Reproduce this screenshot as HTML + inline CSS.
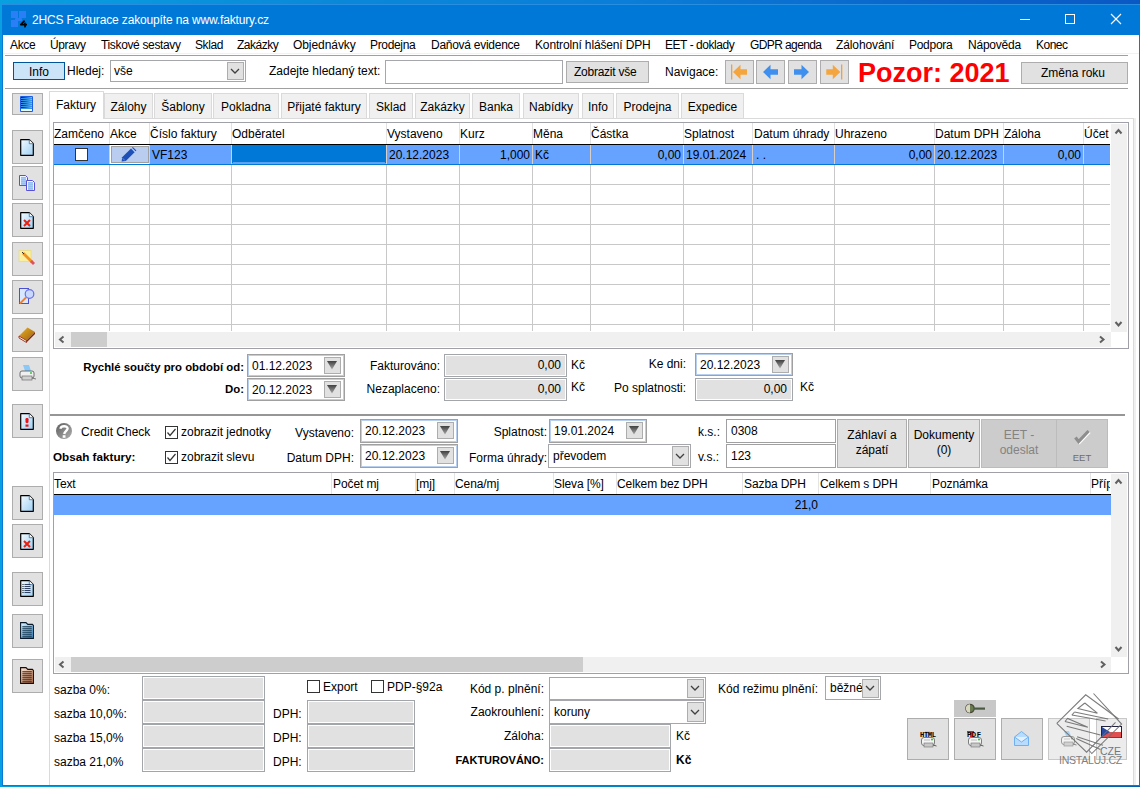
<!DOCTYPE html><html><head><meta charset="utf-8"><style>
*{margin:0;padding:0;box-sizing:border-box}
html,body{width:1140px;height:787px;overflow:hidden}
body{position:relative;background:#0a7fd8;font-family:"Liberation Sans",sans-serif;font-size:12px;color:#000}
.a{position:absolute}
.t{position:absolute;white-space:nowrap;line-height:14px}
.sep{position:absolute;height:2px;border-top:1px solid #a0a0a0;border-bottom:1px solid #fff}
.btn{position:absolute;background:#e1e1e1;border:1px solid #adadad}
.lb{position:absolute;left:12px;width:31px;height:33px;background:#e1e1e1;border:1px solid #adadad}
.inp{position:absolute;background:#fff;border:1px solid #a0a0a0}
.fld{position:absolute;background:#e1e1e1;border:1px solid #a2a5aa;box-shadow:inset 0 0 0 1px #fff}
.cb{position:absolute;width:13px;height:13px;border:1px solid #333;background:#fff}
.dp{position:absolute;background:#fff;border:1px solid #a0a0a0;box-shadow:inset 0 0 0 2px #c7d9f0}
.dpb{position:absolute;background:#e1e1e1;border:1px solid #adadad}
.tab{position:absolute;top:93px;height:25px;background:#f0f0f0;border:1px solid #dadada;border-bottom:none}
svg{position:absolute;overflow:visible}
</style></head><body>
<div class="a" style="left:0px;top:0px;width:1140px;height:787px;background:linear-gradient(90deg,#08a0e0,#0a88d8 30%,#0a7ed8 55%,#0a66cc 80%,#0a58c4)"></div>
<div class="a" style="left:0px;top:786px;width:1140px;height:1px;background:linear-gradient(90deg,#00a0e0,#0088c8 50%,#0060b0)"></div>
<div class="a" style="left:2px;top:4px;width:1138px;height:782px;background:#fff;border:1px solid #0a78d6"></div>
<div class="a" style="left:2px;top:4px;width:1138px;height:31px;background:#0078d7"></div>
<div class="a" style="left:2px;top:4px;width:1138px;height:1px;background:#2a8ee0"></div>
<div class="a" style="left:1134px;top:118px;width:2px;height:667px;background:#f0f0f0"></div>
<div class="a" style="left:11px;top:11px;width:7px;height:7px;background:#2a7ef6"></div>
<div class="a" style="left:19px;top:11px;width:7px;height:7px;background:#2a7ef6"></div>
<div class="a" style="left:11px;top:20px;width:7px;height:7px;background:#2a7ef6"></div>
<div class="a" style="left:15px;top:18px;width:7px;height:3px;background:#2a7ef6;border-radius:1px"></div>
<svg style="left:20px;top:20px" width="8" height="8"><path d="M4.6 0.6 L0.8 4.6 L7 4.6 M4.9 2.6 L5.1 7.4" fill="none" stroke="#000" stroke-width="1.7" stroke-linejoin="round"/></svg>
<div class="t" style="left:32px;top:13px;color:#fff;font-size:12px;letter-spacing:-0.15px">2HCS Fakturace zakoupíte na www.faktury.cz</div>
<div class="a" style="left:1020px;top:19px;width:10px;height:1px;background:#fff"></div>
<div class="a" style="left:1065px;top:14px;width:10px;height:10px;border:1px solid #fff"></div>
<svg style="left:1110px;top:13px" width="12" height="12"><path d="M1 1 L11 11 M11 1 L1 11" stroke="#fff" stroke-width="1.1"/></svg>
<div class="t" style="left:10px;top:38px;letter-spacing:-0.33px">Akce</div>
<div class="t" style="left:50px;top:38px;letter-spacing:-0.4px">Úpravy</div>
<div class="t" style="left:101px;top:38px;letter-spacing:-0.35px">Tiskové sestavy</div>
<div class="t" style="left:195px;top:38px;letter-spacing:-0.41px">Sklad</div>
<div class="t" style="left:237px;top:38px;letter-spacing:-0.5px">Zakázky</div>
<div class="t" style="left:293px;top:38px;letter-spacing:-0.07px">Objednávky</div>
<div class="t" style="left:370px;top:38px;letter-spacing:-0.34px">Prodejna</div>
<div class="t" style="left:431px;top:38px;letter-spacing:-0.27px">Daňová evidence</div>
<div class="t" style="left:535px;top:38px;letter-spacing:-0.15px">Kontrolní hlášení DPH</div>
<div class="t" style="left:665px;top:38px;letter-spacing:-0.45px">EET - doklady</div>
<div class="t" style="left:750px;top:38px;letter-spacing:-0.6px">GDPR agenda</div>
<div class="t" style="left:836px;top:38px;letter-spacing:-0.11px">Zálohování</div>
<div class="t" style="left:909px;top:38px;letter-spacing:-0.28px">Podpora</div>
<div class="t" style="left:968px;top:38px;letter-spacing:-0.23px">Nápověda</div>
<div class="t" style="left:1036px;top:38px;letter-spacing:-0.5px">Konec</div>
<div class="a" style="left:3px;top:53px;width:1136px;height:1px;background:#f2f2f2"></div>
<div class="sep" style="left:5px;top:55px;width:1123px"></div>
<div class="sep" style="left:5px;top:88px;width:1123px"></div>
<div class="a" style="left:13px;top:62px;width:52px;height:18px;background:#cce4f7;border:1px solid #005499"></div>
<div class="t" style="left:29px;top:65px;">Info</div>
<div class="t" style="left:67px;top:64px;">Hledej:</div>
<div class="inp" style="left:110px;top:60px;width:136px;height:22px;border-color:#a5a7ab"></div>
<div class="dpb" style="left:227px;top:62px;width:17px;height:18px"></div>
<svg style="left:231px;top:69px" width="8" height="4"><path d="M0 0 L4.0 4 L8 0" fill="none" stroke="#404040" stroke-width="1.3"/></svg>
<div class="t" style="left:114px;top:64px;">vše</div>
<div class="t" style="left:269px;top:64px;">Zadejte hledaný text:</div>
<div class="inp" style="left:385px;top:60px;width:178px;height:24px;border-color:#a5a7ab"></div>
<div class="btn" style="left:566px;top:61px;width:83px;height:22px"></div>
<div class="t" style="left:574px;top:65px;letter-spacing:-0.25px">Zobrazit vše</div>
<div class="t" style="left:665px;top:65px;">Navigace:</div>
<div class="btn" style="left:725px;top:60px;width:29px;height:24px"></div>
<div class="btn" style="left:756px;top:60px;width:29px;height:24px"></div>
<div class="btn" style="left:788px;top:60px;width:29px;height:24px"></div>
<div class="btn" style="left:820px;top:60px;width:29px;height:24px"></div>
<svg style="left:731px;top:64px" width="18" height="16"><rect x="0" y="0.5" width="1.3" height="15" fill="#f0a040"/><path d="M2 8 L9.5 0.8 L9.5 5.2 L16 5.2 L16 10.8 L9.5 10.8 L9.5 15.2 Z" fill="#f4a53e"/></svg>
<svg style="left:763px;top:64px" width="18" height="16"><path d="M0 8 L7.5 0.8 L7.5 5.2 L15 5.2 L15 10.8 L7.5 10.8 L7.5 15.2 Z" fill="#3f90ee"/></svg>
<svg style="left:794px;top:64px" width="18" height="16"><path d="M15 8 L7.5 0.8 L7.5 5.2 L0 5.2 L0 10.8 L7.5 10.8 L7.5 15.2 Z" fill="#3f90ee"/></svg>
<svg style="left:826px;top:64px" width="18" height="16"><rect x="15" y="0.5" width="1.3" height="15" fill="#f0a040"/><path d="M14.3 8 L6.8 0.8 L6.8 5.2 L0.3 5.2 L0.3 10.8 L6.8 10.8 L6.8 15.2 Z" fill="#f4a53e"/></svg>
<div class="t" style="left:858px;top:58px;font-size:27px;font-weight:bold;color:#ff0000;line-height:30px">Pozor: 2021</div>
<div class="btn" style="left:1021px;top:62px;width:107px;height:22px"></div>
<div class="t" style="left:1041px;top:66px;">Změna roku</div>
<div class="lb" style="top:93px;height:22px"></div>
<div class="lb" style="top:130px;height:34px"></div>
<div class="lb" style="top:166px;height:34px"></div>
<div class="lb" style="top:203px;height:34px"></div>
<div class="lb" style="top:242px;height:34px"></div>
<div class="lb" style="top:280px;height:34px"></div>
<div class="lb" style="top:318px;height:34px"></div>
<div class="lb" style="top:357px;height:34px"></div>
<div class="lb" style="top:404px;height:34px"></div>
<div class="lb" style="top:486px;height:34px"></div>
<div class="lb" style="top:524px;height:34px"></div>
<div class="lb" style="top:572px;height:34px"></div>
<div class="lb" style="top:614px;height:34px"></div>
<div class="lb" style="top:659px;height:34px"></div>
<div class="a" style="left:49px;top:91px;width:1px;height:694px;background:#dadada"></div>
<div class="a" style="left:1133px;top:118px;width:1px;height:667px;background:#dadada"></div>
<div class="a" style="left:104px;top:118px;width:1030px;height:1px;background:#dadada"></div>
<div class="tab" style="left:104px;width:49px"><div class="t" style="left:0;width:100%;text-align:center;top:6px">Zálohy</div></div>
<div class="tab" style="left:154px;width:58px"><div class="t" style="left:0;width:100%;text-align:center;top:6px">Šablony</div></div>
<div class="tab" style="left:213px;width:66px"><div class="t" style="left:0;width:100%;text-align:center;top:6px">Pokladna</div></div>
<div class="tab" style="left:281px;width:86px"><div class="t" style="left:0;width:100%;text-align:center;top:6px">Přijaté faktury</div></div>
<div class="tab" style="left:369px;width:44px"><div class="t" style="left:0;width:100%;text-align:center;top:6px">Sklad</div></div>
<div class="tab" style="left:415px;width:55px"><div class="t" style="left:0;width:100%;text-align:center;top:6px">Zakázky</div></div>
<div class="tab" style="left:472px;width:48px"><div class="t" style="left:0;width:100%;text-align:center;top:6px">Banka</div></div>
<div class="tab" style="left:523px;width:56px"><div class="t" style="left:0;width:100%;text-align:center;top:6px">Nabídky</div></div>
<div class="tab" style="left:582px;width:32px"><div class="t" style="left:0;width:100%;text-align:center;top:6px">Info</div></div>
<div class="tab" style="left:616px;width:63px"><div class="t" style="left:0;width:100%;text-align:center;top:6px">Prodejna</div></div>
<div class="tab" style="left:681px;width:63px"><div class="t" style="left:0;width:100%;text-align:center;top:6px">Expedice</div></div>
<div class="a" style="left:49px;top:91px;width:55px;height:28px;background:#fff;border:1px solid #dadada;border-bottom:none"></div>
<div class="t" style="left:56px;top:98px;">Faktury</div>
<div class="a" style="left:53px;top:122px;width:1076px;height:227px;border:1px solid #a0a0a8;background:#fff"></div>
<div class="a" style="left:54px;top:184px;width:1056px;height:1px;background:#c8c8c8"></div>
<div class="a" style="left:54px;top:204px;width:1056px;height:1px;background:#c8c8c8"></div>
<div class="a" style="left:54px;top:224px;width:1056px;height:1px;background:#c8c8c8"></div>
<div class="a" style="left:54px;top:244px;width:1056px;height:1px;background:#c8c8c8"></div>
<div class="a" style="left:54px;top:264px;width:1056px;height:1px;background:#c8c8c8"></div>
<div class="a" style="left:54px;top:284px;width:1056px;height:1px;background:#c8c8c8"></div>
<div class="a" style="left:54px;top:304px;width:1056px;height:1px;background:#c8c8c8"></div>
<div class="a" style="left:54px;top:324px;width:1056px;height:1px;background:#c8c8c8"></div>
<div class="a" style="left:109px;top:123px;width:1px;height:21px;background:#e2e2e2"></div>
<div class="a" style="left:109px;top:165px;width:1px;height:166px;background:#c8c8c8"></div>
<div class="a" style="left:149px;top:123px;width:1px;height:21px;background:#e2e2e2"></div>
<div class="a" style="left:149px;top:165px;width:1px;height:166px;background:#c8c8c8"></div>
<div class="a" style="left:231px;top:123px;width:1px;height:21px;background:#e2e2e2"></div>
<div class="a" style="left:231px;top:165px;width:1px;height:166px;background:#c8c8c8"></div>
<div class="a" style="left:386px;top:123px;width:1px;height:21px;background:#e2e2e2"></div>
<div class="a" style="left:386px;top:165px;width:1px;height:166px;background:#c8c8c8"></div>
<div class="a" style="left:459px;top:123px;width:1px;height:21px;background:#e2e2e2"></div>
<div class="a" style="left:459px;top:165px;width:1px;height:166px;background:#c8c8c8"></div>
<div class="a" style="left:532px;top:123px;width:1px;height:21px;background:#e2e2e2"></div>
<div class="a" style="left:532px;top:165px;width:1px;height:166px;background:#c8c8c8"></div>
<div class="a" style="left:590px;top:123px;width:1px;height:21px;background:#e2e2e2"></div>
<div class="a" style="left:590px;top:165px;width:1px;height:166px;background:#c8c8c8"></div>
<div class="a" style="left:683px;top:123px;width:1px;height:21px;background:#e2e2e2"></div>
<div class="a" style="left:683px;top:165px;width:1px;height:166px;background:#c8c8c8"></div>
<div class="a" style="left:752px;top:123px;width:1px;height:21px;background:#e2e2e2"></div>
<div class="a" style="left:752px;top:165px;width:1px;height:166px;background:#c8c8c8"></div>
<div class="a" style="left:834px;top:123px;width:1px;height:21px;background:#e2e2e2"></div>
<div class="a" style="left:834px;top:165px;width:1px;height:166px;background:#c8c8c8"></div>
<div class="a" style="left:934px;top:123px;width:1px;height:21px;background:#e2e2e2"></div>
<div class="a" style="left:934px;top:165px;width:1px;height:166px;background:#c8c8c8"></div>
<div class="a" style="left:1003px;top:123px;width:1px;height:21px;background:#e2e2e2"></div>
<div class="a" style="left:1003px;top:165px;width:1px;height:166px;background:#c8c8c8"></div>
<div class="a" style="left:1083px;top:123px;width:1px;height:21px;background:#e2e2e2"></div>
<div class="a" style="left:1083px;top:165px;width:1px;height:166px;background:#c8c8c8"></div>
<div class="t" style="left:54px;top:127px;">Zamčeno</div>
<div class="t" style="left:110px;top:127px;">Akce</div>
<div class="t" style="left:150px;top:127px;">Číslo faktury</div>
<div class="t" style="left:232px;top:127px;">Odběratel</div>
<div class="t" style="left:387px;top:127px;">Vystaveno</div>
<div class="t" style="left:460px;top:127px;">Kurz</div>
<div class="t" style="left:533px;top:127px;">Měna</div>
<div class="t" style="left:591px;top:127px;">Částka</div>
<div class="t" style="left:684px;top:127px;">Splatnost</div>
<div class="t" style="left:754px;top:127px;">Datum úhrady</div>
<div class="t" style="left:835px;top:127px;">Uhrazeno</div>
<div class="t" style="left:935px;top:127px;">Datum DPH</div>
<div class="t" style="left:1004px;top:127px;">Záloha</div>
<div class="t" style="left:1084px;top:127px;">Účet</div>
<div class="a" style="left:54px;top:144px;width:1056px;height:1px;background:#000"></div>
<div class="a" style="left:54px;top:145px;width:1056px;height:19px;background:#66a2ff"></div>
<div class="a" style="left:54px;top:164px;width:1056px;height:1px;background:#0078d7"></div>
<div class="a" style="left:109px;top:145px;width:1px;height:19px;background:#d8d0c8"></div>
<div class="a" style="left:149px;top:145px;width:1px;height:19px;background:#d8d0c8"></div>
<div class="a" style="left:231px;top:145px;width:1px;height:19px;background:#d8d0c8"></div>
<div class="a" style="left:386px;top:145px;width:1px;height:19px;background:#d8d0c8"></div>
<div class="a" style="left:459px;top:145px;width:1px;height:19px;background:#d8d0c8"></div>
<div class="a" style="left:532px;top:145px;width:1px;height:19px;background:#d8d0c8"></div>
<div class="a" style="left:590px;top:145px;width:1px;height:19px;background:#d8d0c8"></div>
<div class="a" style="left:683px;top:145px;width:1px;height:19px;background:#d8d0c8"></div>
<div class="a" style="left:752px;top:145px;width:1px;height:19px;background:#d8d0c8"></div>
<div class="a" style="left:834px;top:145px;width:1px;height:19px;background:#d8d0c8"></div>
<div class="a" style="left:934px;top:145px;width:1px;height:19px;background:#d8d0c8"></div>
<div class="a" style="left:1003px;top:145px;width:1px;height:19px;background:#d8d0c8"></div>
<div class="a" style="left:1083px;top:145px;width:1px;height:19px;background:#d8d0c8"></div>
<div class="a" style="left:232px;top:145px;width:154px;height:18px;background:#0078d7"></div>
<div class="a" style="left:233px;top:162px;width:152px;height:1px;background:#5ea0f0"></div>
<div class="cb" style="left:75px;top:148px"></div>
<div class="a" style="left:110px;top:145px;width:39px;height:19px;background:#fff"></div>
<div class="a" style="left:111px;top:146px;width:38px;height:17px;background:#b8cdf0;border:1px solid #a0a0a0"></div>
<svg style="left:121px;top:147px" width="16" height="15"><path d="M1.2 10.2 L10 1.6 L13.6 5.2 L4.8 14 L0.6 14.6 Z" fill="#1f50b8"/><path d="M11 0.7 L11.8 -0.1 L15.4 3.5 L14.6 4.3 Z" fill="#1f50b8"/><path d="M1.6 11.2 L3.8 13.4" stroke="#8aa8e0" stroke-width="0.7"/></svg>
<div class="t" style="left:152px;top:148px;">VF123</div>
<div class="t" style="left:389px;top:148px;">20.12.2023</div>
<div class="t" style="right:610px;top:148px;">1,000</div>
<div class="t" style="left:535px;top:148px;">Kč</div>
<div class="t" style="right:459px;top:148px;">0,00</div>
<div class="t" style="left:686px;top:148px;">19.01.2024</div>
<div class="t" style="left:756px;top:148px;">. .</div>
<div class="t" style="right:208px;top:148px;">0,00</div>
<div class="t" style="left:937px;top:148px;">20.12.2023</div>
<div class="t" style="right:59px;top:148px;">0,00</div>
<div class="a" style="left:1111px;top:124px;width:16px;height:208px;background:#f0f0f0"></div>
<svg style="left:1115px;top:128px" width="7" height="7"><path d="M0.5 5.5 L3.5 2 L6.5 5.5" fill="none" stroke="#606060" stroke-width="2"/></svg>
<svg style="left:1115px;top:321px" width="7" height="7"><path d="M0.5 1 L3.5 4.5 L6.5 1" fill="none" stroke="#606060" stroke-width="2"/></svg>
<div class="a" style="left:55px;top:332px;width:1056px;height:15px;background:#f0f0f0"></div>
<div class="a" style="left:71px;top:332px;width:36px;height:15px;background:#cdcdcd"></div>
<svg style="left:58px;top:336px" width="7" height="7"><path d="M5.5 0.5 L2 3.5 L5.5 6.5" fill="none" stroke="#606060" stroke-width="2"/></svg>
<svg style="left:1099px;top:336px" width="7" height="7"><path d="M1 0.5 L4.5 3.5 L1 6.5" fill="none" stroke="#606060" stroke-width="2"/></svg>
<div class="t" style="right:896px;top:360px;font-weight:bold;font-size:11.4px">Rychlé součty pro období od:</div>
<div class="t" style="right:896px;top:382px;font-weight:bold;font-size:11.4px">Do:</div>
<div class="a" style="left:247px;top:354px;width:98px;height:23px;background:#fff;border:1px solid #a0a0a0;box-shadow:inset 0 0 0 1px #b8d0ee"></div>
<div class="dpb" style="left:324px;top:357px;width:17px;height:17px"></div>
<svg style="left:327px;top:361px" width="10" height="9"><defs><linearGradient id="tg" x1="0" y1="0" x2="0" y2="1"><stop offset="0" stop-color="#404040"/><stop offset="1" stop-color="#a8a8a8"/></linearGradient></defs><path d="M0 0 L10 0 L5 8.5 Z" fill="url(#tg)"/></svg>
<div class="t" style="left:252px;top:359px;">01.12.2023</div>
<div class="a" style="left:247px;top:378px;width:98px;height:23px;background:#fff;border:1px solid #a0a0a0;box-shadow:inset 0 0 0 1px #b8d0ee"></div>
<div class="dpb" style="left:324px;top:381px;width:17px;height:17px"></div>
<svg style="left:327px;top:385px" width="10" height="9"><defs><linearGradient id="tg" x1="0" y1="0" x2="0" y2="1"><stop offset="0" stop-color="#404040"/><stop offset="1" stop-color="#a8a8a8"/></linearGradient></defs><path d="M0 0 L10 0 L5 8.5 Z" fill="url(#tg)"/></svg>
<div class="t" style="left:252px;top:383px;">20.12.2023</div>
<div class="t" style="right:700px;top:359px;">Fakturováno:</div>
<div class="t" style="right:700px;top:382px;">Nezaplaceno:</div>
<div class="fld" style="left:444px;top:354px;width:123px;height:23px"></div>
<div class="t" style="right:579px;top:358px;">0,00</div>
<div class="fld" style="left:444px;top:378px;width:123px;height:23px"></div>
<div class="t" style="right:579px;top:382px;">0,00</div>
<div class="t" style="left:571px;top:358px;">Kč</div>
<div class="t" style="left:571px;top:380px;">Kč</div>
<div class="t" style="right:454px;top:357px;">Ke dni:</div>
<div class="a" style="left:695px;top:353px;width:98px;height:23px;background:#fff;border:1px solid #a0a0a0;box-shadow:inset 0 0 0 1px #b8d0ee"></div>
<div class="dpb" style="left:772px;top:356px;width:17px;height:17px"></div>
<svg style="left:775px;top:360px" width="10" height="9"><defs><linearGradient id="tg" x1="0" y1="0" x2="0" y2="1"><stop offset="0" stop-color="#404040"/><stop offset="1" stop-color="#a8a8a8"/></linearGradient></defs><path d="M0 0 L10 0 L5 8.5 Z" fill="url(#tg)"/></svg>
<div class="t" style="left:700px;top:358px;">20.12.2023</div>
<div class="t" style="right:454px;top:381px;">Po splatnosti:</div>
<div class="fld" style="left:695px;top:378px;width:98px;height:23px"></div>
<div class="t" style="right:353px;top:382px;">0,00</div>
<div class="t" style="left:800px;top:380px;">Kč</div>
<div class="a" style="left:50px;top:414px;width:1075px;height:2px;background:#969696"></div>
<svg style="left:56px;top:423px" width="16" height="16"><defs><linearGradient id="qg" x1="0" y1="0" x2="1" y2="1"><stop offset="0" stop-color="#5e5e5e"/><stop offset="1" stop-color="#b0b0b0"/></linearGradient></defs><circle cx="8" cy="8" r="8" fill="url(#qg)"/><path d="M4.6 5.8 C4.6 2.6 11.6 2.4 11.6 5.6 C11.6 7.6 8.6 8.2 8.2 11" fill="none" stroke="#fff" stroke-width="2.4"/><rect x="6.7" y="12.2" width="2.8" height="2.6" fill="#fff"/></svg>
<div class="t" style="left:81px;top:425px;">Credit Check</div>
<div class="cb" style="left:165px;top:426px;border-color:#333"></div>
<svg style="left:165px;top:426px" width="13" height="13"><path d="M2.5 6.5 L5 9.5 L10.5 3" fill="none" stroke="#333" stroke-width="1.2"/></svg>
<div class="t" style="left:181px;top:425px;">zobrazit jednotky</div>
<div class="t" style="left:53px;top:450px;font-weight:bold;font-size:11.7px">Obsah faktury:</div>
<div class="cb" style="left:165px;top:451px;border-color:#333"></div>
<svg style="left:165px;top:451px" width="13" height="13"><path d="M2.5 6.5 L5 9.5 L10.5 3" fill="none" stroke="#333" stroke-width="1.2"/></svg>
<div class="t" style="left:181px;top:450px;">zobrazit slevu</div>
<div class="t" style="right:786px;top:426px;">Vystaveno:</div>
<div class="t" style="right:786px;top:451px;">Datum DPH:</div>
<div class="a" style="left:360px;top:419px;width:98px;height:24px;background:#fff;border:1px solid #a0a0a0;box-shadow:inset 0 0 0 1px #b8d0ee"></div>
<div class="dpb" style="left:437px;top:422px;width:17px;height:17px"></div>
<svg style="left:440px;top:426px" width="10" height="9"><defs><linearGradient id="tg" x1="0" y1="0" x2="0" y2="1"><stop offset="0" stop-color="#404040"/><stop offset="1" stop-color="#a8a8a8"/></linearGradient></defs><path d="M0 0 L10 0 L5 8.5 Z" fill="url(#tg)"/></svg>
<div class="t" style="left:365px;top:424px;">20.12.2023</div>
<div class="a" style="left:360px;top:444px;width:98px;height:24px;background:#fff;border:1px solid #a0a0a0;box-shadow:inset 0 0 0 1px #b8d0ee"></div>
<div class="dpb" style="left:437px;top:447px;width:17px;height:17px"></div>
<svg style="left:440px;top:451px" width="10" height="9"><defs><linearGradient id="tg" x1="0" y1="0" x2="0" y2="1"><stop offset="0" stop-color="#404040"/><stop offset="1" stop-color="#a8a8a8"/></linearGradient></defs><path d="M0 0 L10 0 L5 8.5 Z" fill="url(#tg)"/></svg>
<div class="t" style="left:365px;top:449px;">20.12.2023</div>
<div class="t" style="right:593px;top:425px;">Splatnost:</div>
<div class="t" style="right:593px;top:451px;">Forma úhrady:</div>
<div class="a" style="left:549px;top:419px;width:98px;height:24px;background:#fff;border:1px solid #a0a0a0;box-shadow:inset 0 0 0 1px #b8d0ee"></div>
<div class="dpb" style="left:626px;top:422px;width:17px;height:17px"></div>
<svg style="left:629px;top:426px" width="10" height="9"><defs><linearGradient id="tg" x1="0" y1="0" x2="0" y2="1"><stop offset="0" stop-color="#404040"/><stop offset="1" stop-color="#a8a8a8"/></linearGradient></defs><path d="M0 0 L10 0 L5 8.5 Z" fill="url(#tg)"/></svg>
<div class="t" style="left:554px;top:424px;">19.01.2024</div>
<div class="inp" style="left:548px;top:444px;width:143px;height:24px;border-color:#a5a7ab"></div>
<div class="dpb" style="left:672px;top:446px;width:17px;height:20px"></div>
<svg style="left:676px;top:454px" width="8" height="4"><path d="M0 0 L4.0 4 L8 0" fill="none" stroke="#404040" stroke-width="1.3"/></svg>
<div class="t" style="left:553px;top:449px;">převodem</div>
<div class="t" style="left:698px;top:425px;">k.s.:</div>
<div class="t" style="left:698px;top:450px;">v.s.:</div>
<div class="inp" style="left:726px;top:419px;width:110px;height:24px"></div>
<div class="t" style="left:731px;top:424px;">0308</div>
<div class="inp" style="left:726px;top:444px;width:110px;height:24px"></div>
<div class="t" style="left:731px;top:449px;">123</div>
<div class="btn" style="left:837px;top:419px;width:70px;height:49px"></div>
<div class="t" style="left:837px;top:428px;width:70px;text-align:center">Záhlaví a</div>
<div class="t" style="left:837px;top:443px;width:70px;text-align:center">zápatí</div>
<div class="btn" style="left:908px;top:419px;width:72px;height:49px"></div>
<div class="t" style="left:908px;top:428px;width:72px;text-align:center">Dokumenty</div>
<div class="t" style="left:908px;top:443px;width:72px;text-align:center">(0)</div>
<div class="btn" style="left:981px;top:419px;width:76px;height:49px;background:#cccccc;border-color:#bcbcbc"></div>
<div class="t" style="left:981px;top:428px;width:76px;text-align:center;color:#838383">EET -</div>
<div class="t" style="left:981px;top:443px;width:76px;text-align:center;color:#838383">odeslat</div>
<div class="btn" style="left:1056px;top:419px;width:52px;height:49px;background:#cccccc;border-color:#bcbcbc"></div>
<svg style="left:1074px;top:429px" width="17" height="17"><path d="M2.2 9.6 L5.6 13.6 L15.6 3" fill="none" stroke="#ffffff" stroke-width="2.6"/><path d="M1.4 8.6 L4.6 12.6 L14.6 2" fill="none" stroke="#8e8e8e" stroke-width="3.2"/></svg>
<div class="t" style="left:1056px;top:451px;width:52px;text-align:center;color:#6e6e6e;font-size:9.5px">EET</div>
<div class="a" style="left:53px;top:472px;width:1076px;height:202px;border:1px solid #a0a0a8;background:#fff"></div>
<div class="a" style="left:331px;top:473px;width:1px;height:21px;background:#e4e4e4"></div>
<div class="a" style="left:415px;top:473px;width:1px;height:21px;background:#e4e4e4"></div>
<div class="a" style="left:454px;top:473px;width:1px;height:21px;background:#e4e4e4"></div>
<div class="a" style="left:553px;top:473px;width:1px;height:21px;background:#e4e4e4"></div>
<div class="a" style="left:616px;top:473px;width:1px;height:21px;background:#e4e4e4"></div>
<div class="a" style="left:742px;top:473px;width:1px;height:21px;background:#e4e4e4"></div>
<div class="a" style="left:818px;top:473px;width:1px;height:21px;background:#e4e4e4"></div>
<div class="a" style="left:930px;top:473px;width:1px;height:21px;background:#e4e4e4"></div>
<div class="a" style="left:1090px;top:473px;width:1px;height:21px;background:#e4e4e4"></div>
<div class="t" style="left:54px;top:477px;letter-spacing:-0.1px">Text</div>
<div class="t" style="left:333px;top:477px;letter-spacing:-0.1px">Počet mj</div>
<div class="t" style="left:416px;top:477px;letter-spacing:-0.1px">[mj]</div>
<div class="t" style="left:455px;top:477px;letter-spacing:-0.1px">Cena/mj</div>
<div class="t" style="left:554px;top:477px;letter-spacing:-0.1px">Sleva [%]</div>
<div class="t" style="left:617px;top:477px;letter-spacing:-0.1px">Celkem bez DPH</div>
<div class="t" style="left:744px;top:477px;letter-spacing:-0.1px">Sazba DPH</div>
<div class="t" style="left:820px;top:477px;letter-spacing:-0.1px">Celkem s DPH</div>
<div class="t" style="left:932px;top:477px;letter-spacing:-0.1px">Poznámka</div>
<div class="t" style="left:1091px;top:477px;width:19px;overflow:hidden">Příp</div>
<div class="a" style="left:54px;top:494px;width:1057px;height:1px;background:#000"></div>
<div class="a" style="left:54px;top:495px;width:1057px;height:20px;background:#66a2ff"></div>
<div class="t" style="right:322px;top:498px;">21,0</div>
<div class="a" style="left:1111px;top:474px;width:16px;height:183px;background:#f0f0f0"></div>
<svg style="left:1115px;top:478px" width="7" height="7"><path d="M0.5 5.5 L3.5 2 L6.5 5.5" fill="none" stroke="#606060" stroke-width="2"/></svg>
<svg style="left:1115px;top:646px" width="7" height="7"><path d="M0.5 1 L3.5 4.5 L6.5 1" fill="none" stroke="#606060" stroke-width="2"/></svg>
<div class="a" style="left:55px;top:657px;width:1056px;height:15px;background:#f0f0f0"></div>
<div class="a" style="left:71px;top:657px;width:512px;height:15px;background:#cdcdcd"></div>
<svg style="left:58px;top:661px" width="7" height="7"><path d="M5.5 0.5 L2 3.5 L5.5 6.5" fill="none" stroke="#606060" stroke-width="2"/></svg>
<svg style="left:1100px;top:661px" width="7" height="7"><path d="M1 0.5 L4.5 3.5 L1 6.5" fill="none" stroke="#606060" stroke-width="2"/></svg>
<div class="t" style="left:54px;top:683px;">sazba 0%:</div>
<div class="fld" style="left:142px;top:676px;width:123px;height:24px"></div>
<div class="t" style="left:54px;top:707px;">sazba 10,0%:</div>
<div class="fld" style="left:142px;top:700px;width:123px;height:24px"></div>
<div class="t" style="left:273px;top:707px;">DPH:</div>
<div class="fld" style="left:307px;top:700px;width:108px;height:24px"></div>
<div class="t" style="left:54px;top:731px;">sazba 15,0%</div>
<div class="fld" style="left:142px;top:724px;width:123px;height:24px"></div>
<div class="t" style="left:273px;top:731px;">DPH:</div>
<div class="fld" style="left:307px;top:724px;width:108px;height:24px"></div>
<div class="t" style="left:54px;top:755px;">sazba 21,0%</div>
<div class="fld" style="left:142px;top:748px;width:123px;height:24px"></div>
<div class="t" style="left:273px;top:755px;">DPH:</div>
<div class="fld" style="left:307px;top:748px;width:108px;height:24px"></div>
<div class="cb" style="left:307px;top:680px;border-color:#333"></div>
<div class="t" style="left:323px;top:680px;">Export</div>
<div class="cb" style="left:371px;top:680px;border-color:#333"></div>
<div class="t" style="left:387px;top:680px;">PDP-§92a</div>
<div class="t" style="right:596px;top:682px;">Kód p. plnění:</div>
<div class="inp" style="left:549px;top:677px;width:157px;height:23px;border-color:#a5a7ab"></div>
<div class="dpb" style="left:687px;top:679px;width:17px;height:19px"></div>
<svg style="left:691px;top:686px" width="8" height="4"><path d="M0 0 L4.0 4 L8 0" fill="none" stroke="#404040" stroke-width="1.3"/></svg>
<div class="t" style="right:596px;top:705px;">Zaokrouhlení:</div>
<div class="inp" style="left:549px;top:700px;width:157px;height:24px;border-color:#a5a7ab"></div>
<div class="dpb" style="left:687px;top:702px;width:17px;height:20px"></div>
<svg style="left:691px;top:710px" width="8" height="4"><path d="M0 0 L4.0 4 L8 0" fill="none" stroke="#404040" stroke-width="1.3"/></svg>
<div class="t" style="left:554px;top:705px;">koruny</div>
<div class="t" style="right:596px;top:729px;">Záloha:</div>
<div class="fld" style="left:549px;top:724px;width:122px;height:24px"></div>
<div class="t" style="left:676px;top:729px;">Kč</div>
<div class="t" style="right:596px;top:753px;font-weight:bold;font-size:11px">FAKTUROVÁNO:</div>
<div class="fld" style="left:549px;top:748px;width:122px;height:24px"></div>
<div class="t" style="left:676px;top:753px;font-weight:bold">Kč</div>
<div class="t" style="left:718px;top:682px;">Kód režimu plnění:</div>
<div class="inp" style="left:825px;top:676px;width:56px;height:24px;border-color:#a5a7ab"></div>
<div class="t" style="left:830px;top:681px;width:32px;overflow:hidden">běžné</div>
<div class="dpb" style="left:862px;top:679px;width:17px;height:19px"></div>
<svg style="left:866px;top:686px" width="8" height="4"><path d="M0 0 L4.0 4 L8 0" fill="none" stroke="#404040" stroke-width="1.3"/></svg>
<div class="a" style="left:954px;top:700px;width:42px;height:17px;background:#c8c8c8"></div>
<svg style="left:965px;top:703px" width="22" height="11"><circle cx="5" cy="5.5" r="4.2" fill="#6a7a50" stroke="#4a4a3a" stroke-width="1.2"/><path d="M5 1.3 A4.2 4.2 0 0 0 5 9.7 Z" fill="#d8d8c0"/><rect x="9" y="4.5" width="11" height="2.2" fill="#4a5a40"/></svg>
<div class="btn" style="left:907px;top:718px;width:42px;height:42px"></div>
<div class="btn" style="left:954px;top:718px;width:42px;height:42px"></div>
<div class="btn" style="left:1001px;top:718px;width:42px;height:42px"></div>
<div class="btn" style="left:1048px;top:718px;width:42px;height:42px;background:#ececec;border-color:#c8c8c8"></div>
<div class="btn" style="left:1096px;top:718px;width:31px;height:42px;background:#ececec;border-color:#c8c8c8"></div>
<svg width="0" height="0" style="position:absolute"><defs>
<linearGradient id="docg" x1="0" y1="0" x2="1" y2="1"><stop offset="0" stop-color="#f4fbff"/><stop offset="1" stop-color="#9cd0f4"/></linearGradient>
<linearGradient id="listg" x1="0" y1="0" x2="1" y2="0"><stop offset="0" stop-color="#001a60"/><stop offset="0.5" stop-color="#1a6cc8"/><stop offset="1" stop-color="#7cc8f0"/></linearGradient>
<linearGradient id="bookg" x1="0" y1="0" x2="1" y2="1"><stop offset="0" stop-color="#e8b020"/><stop offset="1" stop-color="#a06010"/></linearGradient>
<linearGradient id="brg" x1="0" y1="0" x2="1" y2="1"><stop offset="0" stop-color="#fae8dc"/><stop offset="1" stop-color="#c07850"/></linearGradient>
<linearGradient id="blg" x1="0" y1="0" x2="1" y2="1"><stop offset="0" stop-color="#e0f4ff"/><stop offset="1" stop-color="#4090d0"/></linearGradient>
</defs></svg>
<svg style="left:20px;top:96px" width="13" height="16"><rect x="0" y="0" width="13" height="16" rx="1" fill="#1a5ee8"/><rect x="1" y="1" width="11" height="1" fill="url(#listg)"/><rect x="1" y="2" width="11" height="1" fill="#3aa0e0" opacity="0.8"/><rect x="1" y="3" width="11" height="1" fill="url(#listg)"/><rect x="1" y="4" width="11" height="1" fill="#3aa0e0" opacity="0.8"/><rect x="1" y="5" width="11" height="1" fill="url(#listg)"/><rect x="1" y="6" width="11" height="1" fill="#3aa0e0" opacity="0.8"/><rect x="1" y="7" width="11" height="1" fill="url(#listg)"/><rect x="1" y="8" width="11" height="1" fill="#3aa0e0" opacity="0.8"/><rect x="1" y="9" width="11" height="1" fill="url(#listg)"/><rect x="1" y="10" width="11" height="1" fill="#3aa0e0" opacity="0.8"/><rect x="1" y="11" width="11" height="1" fill="url(#listg)"/><rect x="1" y="12" width="11" height="1" fill="#3aa0e0" opacity="0.8"/><rect x="1" y="13" width="11" height="1" fill="url(#listg)"/><rect x="1" y="14" width="11" height="1" fill="#3aa0e0" opacity="0.8"/><rect x="1" y="13" width="11" height="2" fill="#e8f8ff"/></svg>
<svg style="left:20px;top:139px" width="14" height="17"><path d="M0.7 0.7 H9.3 L13.3 4.7 V16.3 H0.7 Z" fill="url(#docg)" stroke="#000" stroke-width="1.2" stroke-linejoin="round"/><path d="M9.3 0.7 V4.7 H13.3" fill="#fff" stroke="#3a6aa0" stroke-width="0.8"/></svg>
<svg style="left:19px;top:175px" width="17" height="16"><g fill="#eef6ff" stroke="#5a50d8" stroke-width="1"><path d="M0.5 0.5 H6.5 L8.5 2.5 V10.5 H0.5 Z"/></g><rect x="2" y="2.5" width="5" height="0.9" fill="#3a8ae0"/><rect x="2" y="4.5" width="5" height="0.9" fill="#3a8ae0"/><rect x="2" y="6.5" width="5" height="0.9" fill="#3a8ae0"/><rect x="2" y="8.5" width="5" height="0.9" fill="#3a8ae0"/><g fill="#eef6ff" stroke="#5a50d8" stroke-width="1"><path d="M7.5 5.5 H13.5 L15.5 7.5 V15.5 H7.5 Z"/></g><rect x="9" y="7.5" width="5" height="0.9" fill="#3a8ae0"/><rect x="9" y="9.5" width="5" height="0.9" fill="#3a8ae0"/><rect x="9" y="11.5" width="5" height="0.9" fill="#3a8ae0"/><rect x="9" y="13.5" width="5" height="0.9" fill="#3a8ae0"/></svg>
<svg style="left:20px;top:212px" width="14" height="17"><path d="M0.7 0.7 H9.3 L13.3 4.7 V16.3 H0.7 Z" fill="url(#docg)" stroke="#000" stroke-width="1.2" stroke-linejoin="round"/><path d="M9.3 0.7 V4.7 H13.3" fill="#fff" stroke="#3a6aa0" stroke-width="0.8"/><path d="M4 8 L10 14 M10 8 L4 14" stroke="#e82010" stroke-width="2"/></svg>
<svg style="left:19px;top:250px" width="16" height="16"><rect x="0" y="0.5" width="12" height="11" fill="#f8f0a0" stroke="#e8d870" stroke-width="0.6"/><path d="M4 3 L13 12" stroke="#f09020" stroke-width="2.8"/><path d="M12 11 L15 14" stroke="#e05060" stroke-width="2.8"/><path d="M3 2 L5 4" stroke="#303030" stroke-width="1"/></svg>
<svg style="left:19px;top:288px" width="16" height="17"><rect x="0.5" y="0.5" width="9" height="15" fill="#d8e8ff" stroke="#4a50d0" stroke-width="1"/><circle cx="10.5" cy="6" r="4.3" fill="#c8d8ff" stroke="#6a70e0" stroke-width="1.2"/><path d="M7 9.5 L1 15.5" stroke="#f08030" stroke-width="1.8"/></svg>
<svg style="left:18px;top:326px" width="18" height="17"><path d="M1 10 L9.5 1.5 L17 6 L8.5 14.5 Z" fill="url(#bookg)"/><path d="M1 10 L8.5 14.5 L8.5 16.5 L1 12 Z" fill="#f8f0e0" stroke="#a02818" stroke-width="0.9"/><path d="M8.5 14.5 L17 6 L17 8 L8.5 16.5 Z" fill="#7a2a10"/></svg>
<svg style="left:19px;top:365px" width="18" height="17"><path d="M4 0 L10 0 L12 6 L6 6 Z" fill="#8ac8f8"/><rect x="1" y="6" width="14" height="7" rx="2" fill="#f0f0f0" stroke="#606060" stroke-width="0.9"/><rect x="3" y="11" width="10" height="4" fill="#d0d0d0" stroke="#707070" stroke-width="0.7"/><circle cx="12" cy="8" r="1" fill="#40c040"/><path d="M13 13 L17 14" stroke="#606060" stroke-width="0.8"/></svg>
<svg style="left:20px;top:413px" width="14" height="17"><path d="M0.7 0.7 H9.3 L13.3 4.7 V16.3 H0.7 Z" fill="url(#docg)" stroke="#000" stroke-width="1.2" stroke-linejoin="round"/><path d="M9.3 0.7 V4.7 H13.3" fill="#fff" stroke="#3a6aa0" stroke-width="0.8"/><rect x="5.5" y="5" width="3" height="5" rx="1.2" fill="#f01010"/><rect x="5.5" y="11.5" width="3" height="2.2" fill="#f01010"/></svg>
<svg style="left:20px;top:495px" width="14" height="17"><path d="M0.7 0.7 H9.3 L13.3 4.7 V16.3 H0.7 Z" fill="url(#docg)" stroke="#000" stroke-width="1.2" stroke-linejoin="round"/><path d="M9.3 0.7 V4.7 H13.3" fill="#fff" stroke="#3a6aa0" stroke-width="0.8"/></svg>
<svg style="left:20px;top:533px" width="14" height="17"><path d="M0.7 0.7 H9.3 L13.3 4.7 V16.3 H0.7 Z" fill="url(#docg)" stroke="#000" stroke-width="1.2" stroke-linejoin="round"/><path d="M9.3 0.7 V4.7 H13.3" fill="#fff" stroke="#3a6aa0" stroke-width="0.8"/><path d="M4 8 L10 14 M10 8 L4 14" stroke="#e82010" stroke-width="2"/></svg>
<svg style="left:20px;top:580px" width="14" height="17"><path d="M0.7 0.7 H9.3 L13.3 4.7 V16.3 H0.7 Z" fill="url(#docg)" stroke="#000" stroke-width="1.2" stroke-linejoin="round"/><path d="M9.3 0.7 V4.7 H13.3" fill="#fff" stroke="#3a6aa0" stroke-width="0.8"/><rect x="2.5" y="4" width="1" height="1" fill="#000"/><rect x="4.5" y="4" width="6" height="0.9" fill="#203050"/><rect x="2.5" y="6" width="1" height="1" fill="#000"/><rect x="4.5" y="6" width="6" height="0.9" fill="#203050"/><rect x="2.5" y="8" width="1" height="1" fill="#000"/><rect x="4.5" y="8" width="6" height="0.9" fill="#203050"/><rect x="2.5" y="10" width="1" height="1" fill="#000"/><rect x="4.5" y="10" width="6" height="0.9" fill="#203050"/><rect x="2.5" y="12" width="1" height="1" fill="#000"/><rect x="4.5" y="12" width="6" height="0.9" fill="#203050"/></svg>
<svg style="left:20px;top:622px" width="14" height="17"><path d="M0.6 0.6 H6 L7.8 2.4 H12.4 L13.4 3.4 V16.4 H0.6 Z" fill="url(#blg)" stroke="#0a1a2a" stroke-width="1.1"/><rect x="2.3" y="4.3" width="9.5" height="1" fill="#0a2a40"/><rect x="2.3" y="6.3" width="9.5" height="1" fill="#0a2a40"/><rect x="2.3" y="8.3" width="9.5" height="1" fill="#0a2a40"/><rect x="2.3" y="10.3" width="9.5" height="1" fill="#0a2a40"/><rect x="2.3" y="12.3" width="9.5" height="1" fill="#0a2a40"/><rect x="2.3" y="14.3" width="9.5" height="1" fill="#0a2a40"/></svg>
<svg style="left:20px;top:667px" width="14" height="17"><path d="M0.6 0.6 H6 L7.8 2.4 H12.4 L13.4 3.4 V16.4 H0.6 Z" fill="url(#brg)" stroke="#1a0a04" stroke-width="1.1"/><rect x="2.3" y="4.3" width="9.5" height="1" fill="#3a1a08"/><rect x="2.3" y="6.3" width="9.5" height="1" fill="#3a1a08"/><rect x="2.3" y="8.3" width="9.5" height="1" fill="#3a1a08"/><rect x="2.3" y="10.3" width="9.5" height="1" fill="#3a1a08"/><rect x="2.3" y="12.3" width="9.5" height="1" fill="#3a1a08"/><rect x="2.3" y="14.3" width="9.5" height="1" fill="#3a1a08"/></svg>
<svg style="left:920px;top:731px" width="17" height="7"><rect x="5" y="0" width="5" height="6" fill="#a8d0ff"/><text x="0" y="6" font-family="Liberation Mono" font-weight="bold" font-size="7.2" fill="#000" textLength="16">HTML</text></svg>
<svg style="left:921px;top:737px;opacity:1" width="16" height="11"><rect x="0.5" y="0.5" width="13" height="8" rx="2.5" fill="#f4f4f4" stroke="#707070" stroke-width="0.9"/><path d="M3 3 H9" stroke="#b0b0b0" stroke-width="0.8"/><circle cx="11" cy="2.5" r="1.1" fill="#40c040"/><rect x="3" y="6" width="9" height="4" fill="#c8c8c8" stroke="#707070" stroke-width="0.6"/><path d="M12 8 L15.5 9" stroke="#505050" stroke-width="0.9"/></svg>
<svg style="left:967px;top:731px" width="16" height="7"><rect x="0" y="0" width="7" height="1.5" fill="#e02020"/><rect x="3" y="0" width="3" height="6" fill="#e02020"/><text x="0" y="6" font-family="Liberation Mono" font-weight="bold" font-size="7.2" fill="#000" textLength="14">PDF</text></svg>
<svg style="left:968px;top:737px;opacity:1" width="16" height="11"><rect x="0.5" y="0.5" width="13" height="8" rx="2.5" fill="#f4f4f4" stroke="#707070" stroke-width="0.9"/><path d="M3 3 H9" stroke="#b0b0b0" stroke-width="0.8"/><circle cx="11" cy="2.5" r="1.1" fill="#40c040"/><rect x="3" y="6" width="9" height="4" fill="#c8c8c8" stroke="#707070" stroke-width="0.6"/><path d="M12 8 L15.5 9" stroke="#505050" stroke-width="0.9"/></svg>
<svg style="left:1014px;top:731px" width="16" height="16"><path d="M0.5 6 L7.5 0.5 L14.5 6 V14.5 H0.5 Z" fill="#b8dcff" stroke="#70b0f0" stroke-width="1"/><path d="M0.5 6 L7.5 11 L14.5 6" fill="#e0f0ff" stroke="#70b0f0" stroke-width="1"/></svg>
<svg style="left:1061px;top:731px;opacity:.7" width="16" height="16"><path d="M3 0 L8 0 L10 5 L5 5 Z" fill="#8ac8f8"/></svg>
<svg style="left:1061px;top:736px;opacity:0.75" width="16" height="11"><rect x="0.5" y="0.5" width="13" height="8" rx="2.5" fill="#f4f4f4" stroke="#707070" stroke-width="0.9"/><path d="M3 3 H9" stroke="#b0b0b0" stroke-width="0.8"/><circle cx="11" cy="2.5" r="1.1" fill="#40c040"/><rect x="3" y="6" width="9" height="4" fill="#c8c8c8" stroke="#707070" stroke-width="0.6"/><path d="M12 8 L15.5 9" stroke="#505050" stroke-width="0.9"/></svg>
<svg style="left:1101px;top:726px" width="21" height="12"><rect x="0.5" y="0.5" width="20" height="11" fill="#fff" stroke="#202040" stroke-width="1"/><rect x="1" y="6" width="19" height="5.5" fill="#e05050"/><path d="M1 1 L9 6 L1 11 Z" fill="#2a4aa0"/></svg>
<div class="t" style="left:1100px;top:744px;font-size:10.5px;color:#6a7888">CZE</div>
<svg style="left:1052px;top:690px" width="74" height="68"><g fill="none" stroke="#6e6e6e" stroke-width="1.05" opacity="0.9"><path d="M4.8 33.3 L33.7 4.8 L66.6 29.0"/><path d="M4.8 33.3 L34.6 62.2 L63.5 32.4"/><path d="M41.5 3.5 L69.6 34.1 L39.8 63.5 L37.2 60.5"/><path d="M32.8 13.0 L45.4 23.2 L25.9 18.6 L32.8 13.0"/><path d="M22.5 22.0 L56.2 29.0"/><path d="M19.9 25.1 L53.6 31.1"/><path d="M19.9 25.1 L22.5 22.0"/><path d="M13.0 31.5 L35.9 37.3 L15.6 28.5 L13.0 31.5"/><path d="M14.7 36.3 L48.4 44.9"/><path d="M25.1 46.7 L51.0 55.3"/><path d="M24.2 48.4 L48.4 59.6"/></g></svg>
<div class="t" style="left:1059px;top:753px;font-size:10.6px;color:#808080;letter-spacing:-0.3px">INSTALUJ.CZ</div>
</body></html>
